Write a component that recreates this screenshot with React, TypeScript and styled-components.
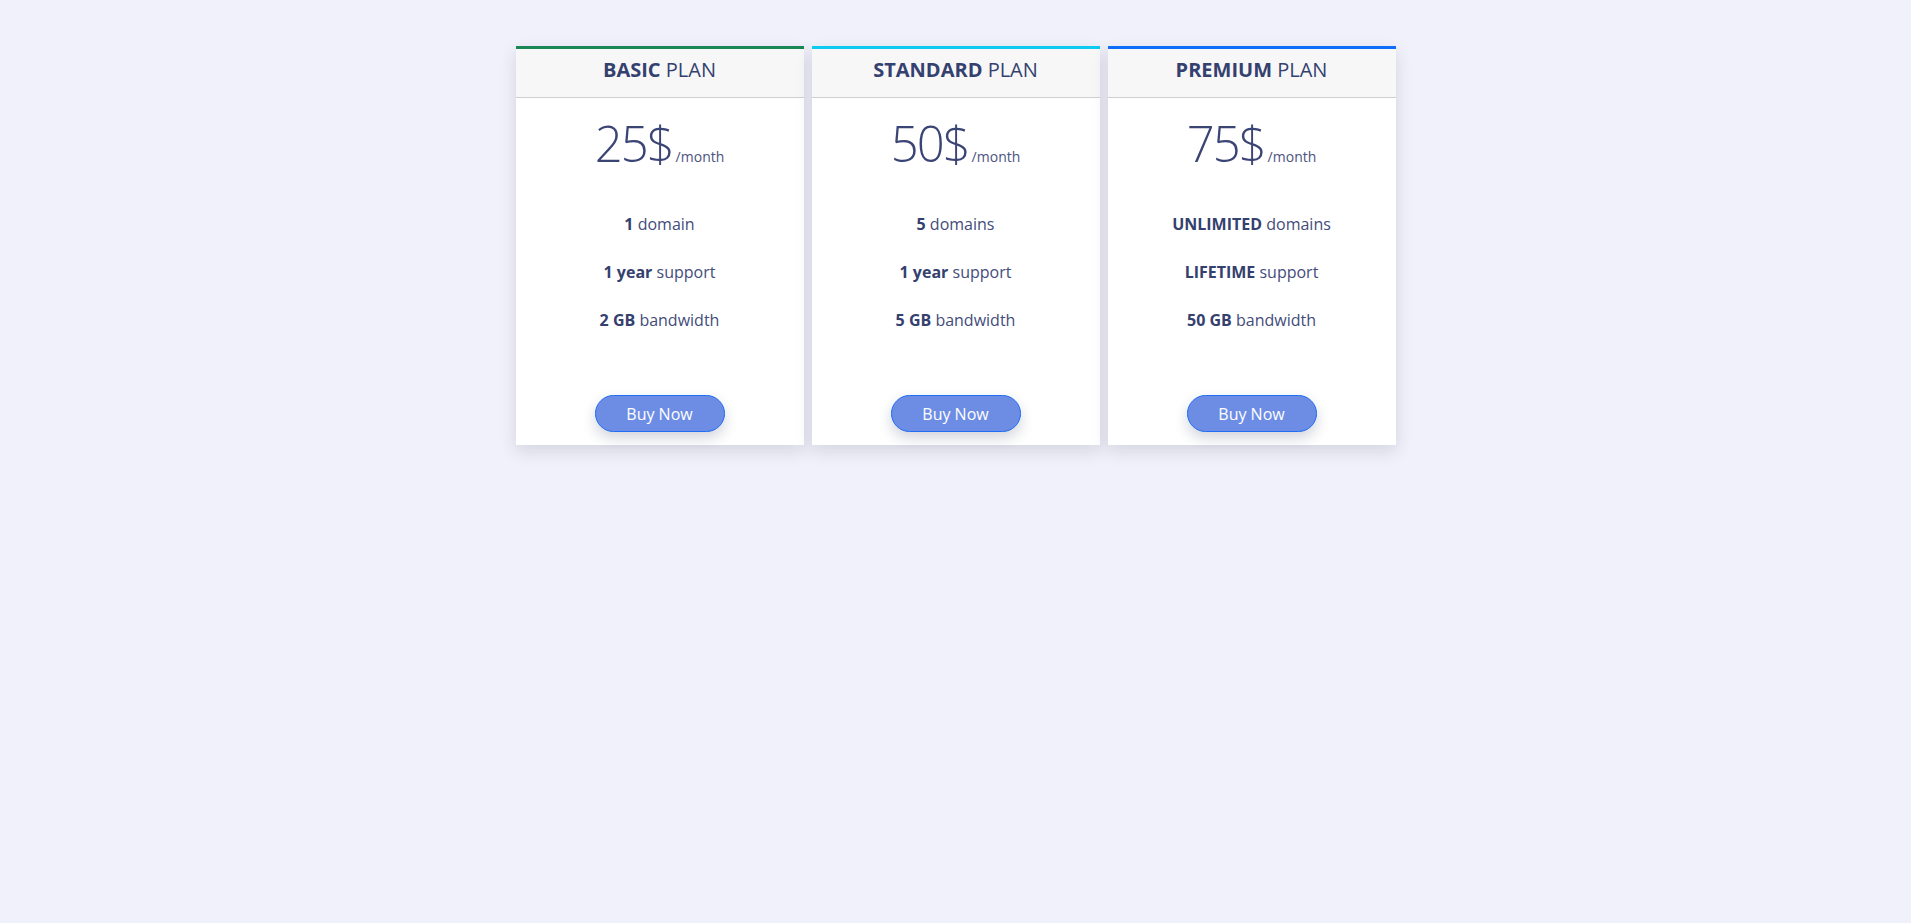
import React from "react";
import styled, { createGlobalStyle } from "styled-components";

const Global = createGlobalStyle`
  html, body { margin: 0; padding: 0; }
  body {
    background: #f0f1fa;
    font-family: "Open Sans", "Noto Sans", sans-serif;
    color: #343f6e;
    min-height: 923px;
  }
`;

const Page = styled.main`
  display: flex;
  justify-content: center;
  padding-top: 46px;
`;

const Deck = styled.div`
  display: flex;
  gap: 8px;
`;

const Card = styled.section<{ $accent: string }>`
  width: 288px;
  display: flex;
  flex-direction: column;
  background: #fff;
  border-top: 3px solid ${(p) => p.$accent};
  box-shadow: 0 6px 16px rgba(40, 44, 70, 0.14);
  text-align: center;
`;

const Header = styled.header`
  height: 47px;
  display: flex;
  align-items: center;
  justify-content: center;
  background: #f7f7f8;
  border-bottom: 1px solid #d0d0d4;
  font-size: 20px;
  font-weight: 400;
  color: #34416f;
  padding-bottom: 1px;
  box-sizing: content-box;
  span { margin-top: -6px; }
  b { font-weight: 700; }
`;

const Body = styled.div`
  display: flex;
  flex-direction: column;
  align-items: center;
  padding: 9px 0 13px;
`;

const Price = styled.div`
  display: flex;
  align-items: baseline;
  justify-content: center;
  height: 72px;
  color: #3b4575;
`;

const Amount = styled.span`
  font-size: 49px;
  font-weight: 300;
  line-height: 72px;
  letter-spacing: -2px;
`;

const Per = styled.span`
  font-size: 14px;
  margin-left: 3px;
  color: #4a5380;
`;

const Features = styled.ul`
  list-style: none;
  margin: 34px 0 0;
  padding: 0;
  display: flex;
  flex-direction: column;
  gap: 26px;
`;

const Feature = styled.li`
  font-size: 16px;
  line-height: 22px;
  color: #434c7b;
  b { font-weight: 700; color: #34406e; }
`;

const BuyButton = styled.button`
  margin-top: 64px;
  width: 130px;
  height: 37px;
  border-radius: 19px;
  border: 1px solid #1f6ef3;
  background: #6d8de4;
  color: #fff;
  font-family: "Open Sans", "Noto Sans", sans-serif;
  font-size: 16px;
  box-shadow: 0 6px 14px rgba(30, 40, 80, 0.2);
  cursor: pointer;
`;

type Plan = {
  name: string;
  accent: string;
  price: string;
  features: [string, string][];
};

const plans: Plan[] = [
  {
    name: "BASIC",
    accent: "#198754",
    price: "25$",
    features: [
      ["1", "domain"],
      ["1 year", "support"],
      ["2 GB", "bandwidth"],
    ],
  },
  {
    name: "STANDARD",
    accent: "#0dcaf0",
    price: "50$",
    features: [
      ["5", "domains"],
      ["1 year", "support"],
      ["5 GB", "bandwidth"],
    ],
  },
  {
    name: "PREMIUM",
    accent: "#0d6efd",
    price: "75$",
    features: [
      ["UNLIMITED", "domains"],
      ["LIFETIME", "support"],
      ["50 GB", "bandwidth"],
    ],
  },
];

export default function App() {
  return (
    <>
      <Global />
      <Page>
        <Deck>
          {plans.map((p) => (
            <Card key={p.name} $accent={p.accent}>
              <Header>
                <span>
                  <b>{p.name}</b> PLAN
                </span>
              </Header>
              <Body>
                <Price>
                  <Amount>{p.price}</Amount>
                  <Per>/month</Per>
                </Price>
                <Features>
                  {p.features.map(([b, t]) => (
                    <Feature key={t}>
                      <b>{b}</b> {t}
                    </Feature>
                  ))}
                </Features>
                <BuyButton>Buy Now</BuyButton>
              </Body>
            </Card>
          ))}
        </Deck>
      </Page>
    </>
  );
}
